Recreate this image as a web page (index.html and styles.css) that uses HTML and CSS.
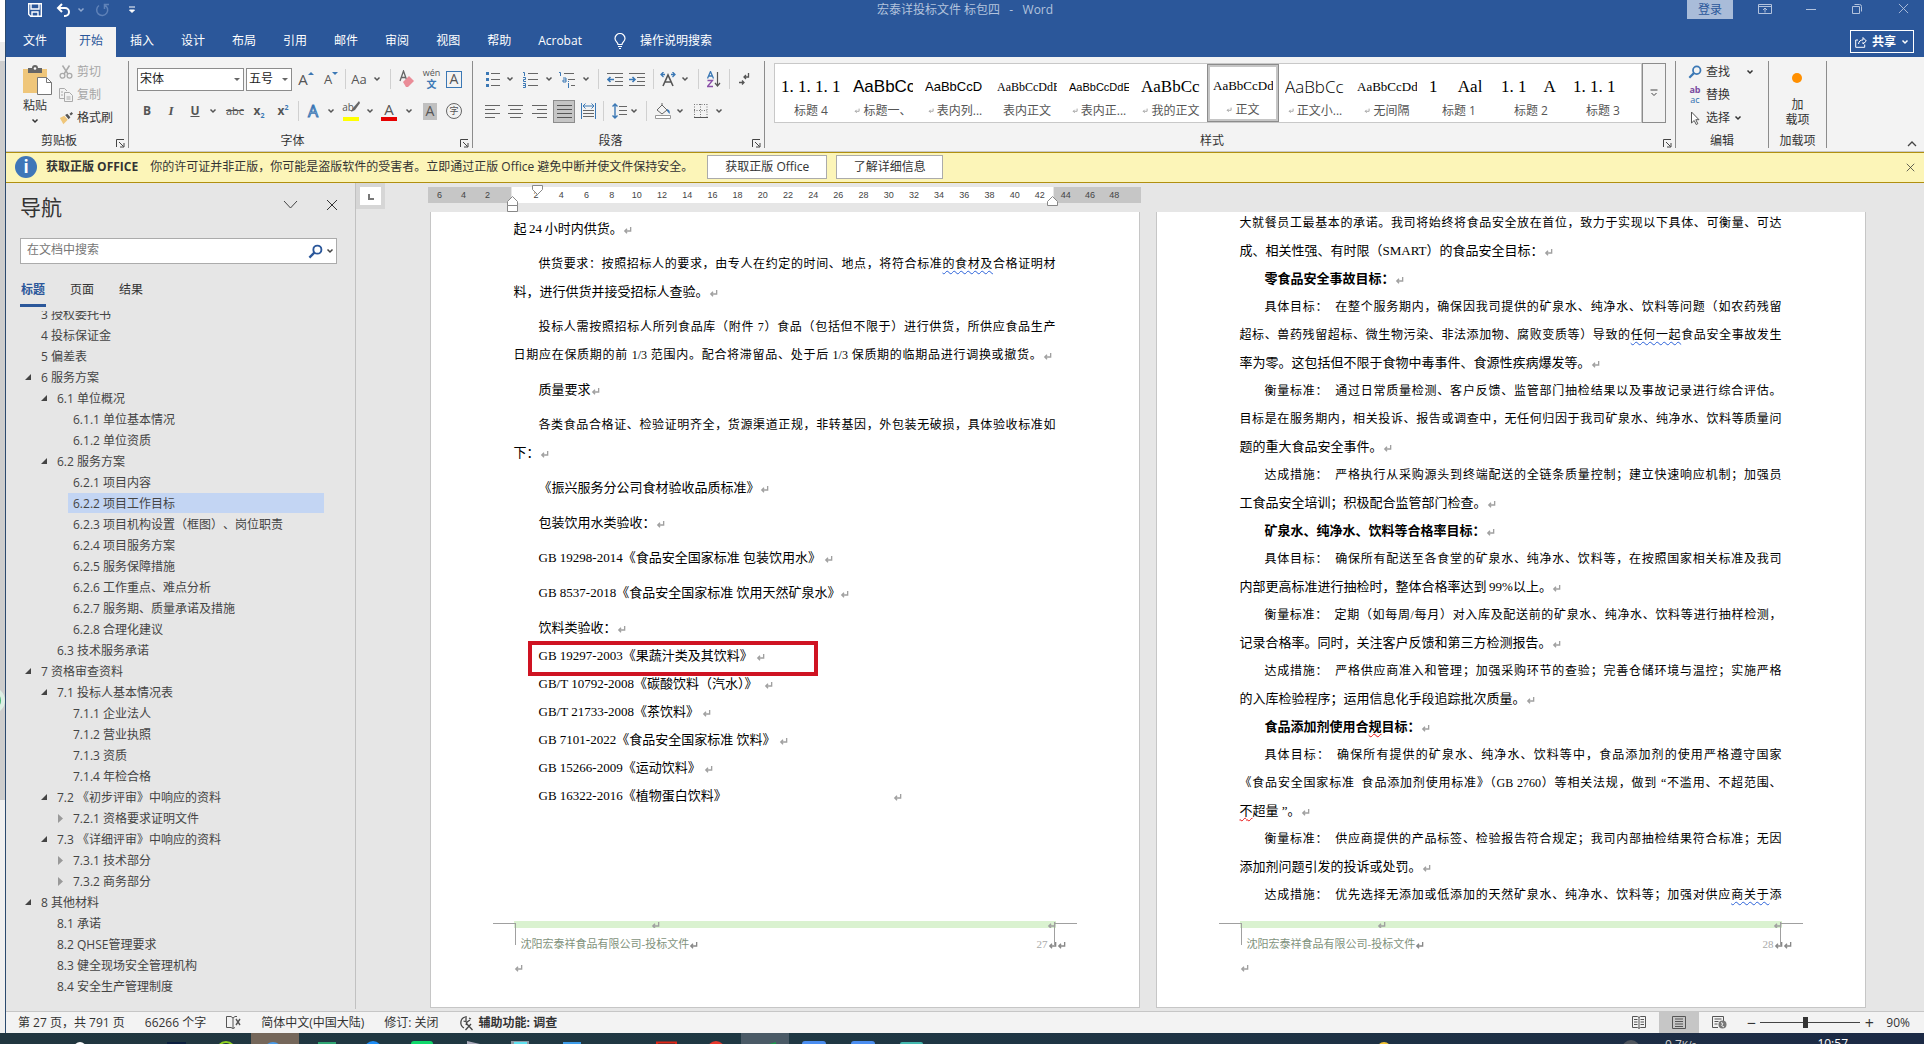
FILE: index.html
```html
<!DOCTYPE html>
<html lang="zh-CN">
<head>
<meta charset="utf-8">
<title>宏泰详投标文件 标包四 - Word</title>
<link rel="stylesheet" href="styles.css">
</head>
<body>
<svg class="defs" aria-hidden="true">
  <symbol id="chev" viewBox="0 0 8 8"><path d="M1.500 2.500 4 5l2.500-2.500" fill="none" stroke="currentColor" stroke-width="1.500"/></symbol>
  <symbol id="launch" viewBox="0 0 9 9"><path d="M.5 8V.5H8M3 3l4.500 4.500M8 4v4H4" fill="none" stroke="#444"/></symbol>
  <symbol id="close" viewBox="0 0 12 12"><path d="M1 1l10 10M11 1 1 11" fill="none" stroke="currentColor"/></symbol>
  <symbol id="lens" viewBox="0 0 16 16"><circle cx="10" cy="6" r="4.300" fill="none" stroke="currentColor" stroke-width="2"/><path d="M7 9 1.500 14.500" stroke="currentColor" stroke-width="2.500"/></symbol>
  <symbol id="ret" viewBox="0 0 10 10"><path d="M8.500 1v4.500H2M4.500 3 2 5.500 4.500 8" fill="none" stroke="currentColor" stroke-width="1.500"/></symbol>
</svg>
<div class="screen">
  <aside class="behind"><i class="blob"></i></aside>
  <div class="word">
    <header class="titlebar">
      <div class="quick">
        <button aria-label="保存"><svg width="14" height="14" viewBox="0 0 14 14"><path d="M.7.700h12.600v12.600H2.700L.7 11.300zM3 1v5h8V1M4 13V9h6v4" fill="none" stroke="#fff" stroke-width="1.400"/></svg></button>
        <button aria-label="撤消"><svg width="16" height="14" viewBox="0 0 16 14"><path d="M6 1 2 5l4 4M2 5h7a4 4 0 0 1 0 8H8" fill="none" stroke="#fff" stroke-width="2"/></svg></button>
        <button aria-label="撤消列表" class="dim"><svg width="8" height="8"><use href="#chev"/></svg></button>
        <button aria-label="重复" class="dim redo"><svg width="14" height="14" viewBox="0 0 14 14"><path d="M9.500 2A5.500 5.500 0 1 1 4 2.500M9.500 6V1.500H14" fill="none" stroke="#5f82b8" stroke-width="1.500"/></svg></button>
        <button aria-label="自定义快速访问工具栏"><svg width="8" height="8" viewBox="0 0 8 8"><path d="M1 1h6M1.500 4h5L4 6.500z" stroke="#fff" fill="#fff"/></svg></button>
      </div>
      <h1 class="doc-title">宏泰详投标文件 标包四 &nbsp;&nbsp;- &nbsp;&nbsp;Word</h1>
      <div class="winctl">
        <button class="login">登录</button>
        <button aria-label="功能区显示选项"><svg width="14" height="12" viewBox="0 0 14 12"><path d="M.5 1.500h13v9H.5zM.5 3.500h13M7 9.500v-4M5 7l2-2 2 2" fill="none" stroke="currentColor"/></svg></button>
        <button aria-label="最小化"><svg width="10" height="12"><path d="M0 6.500h10" stroke="currentColor"/></svg></button>
        <button aria-label="还原"><svg width="10" height="10" viewBox="0 0 10 10"><path d="M.5 2.500h7v7h-7zM2.500.500h5a2 2 0 0 1 2 2v5" fill="none" stroke="currentColor"/></svg></button>
        <button aria-label="关闭"><svg width="11" height="11"><use href="#close"/></svg></button>
      </div>
    </header>
    <nav class="tabs">
      <button class="file">文件</button><button class="on">开始</button><button>插入</button><button>设计</button><button>布局</button><button>引用</button><button>邮件</button><button>审阅</button><button>视图</button><button>帮助</button><button>Acrobat</button>
      <button class="tell"><svg width="12" height="16" viewBox="0 0 12 16"><path d="M4 11.500C4 9 1 8.500 1 5.500a5 5 0 0 1 10 0c0 3-3 3.500-3 6zM4 13.500h4M5 15.500h2" fill="none" stroke="#fff" stroke-width="1.200"/></svg>操作说明搜索</button>
      <button class="share"><svg width="12" height="12" viewBox="0 0 12 12"><path d="M3 4H.7v7.300h9V8.500M3.500 8c.5-3 2-4 4.500-4V1.500L11.300 5 8 8V6" fill="none" stroke="#fff"/></svg>共享<svg width="8" height="8"><use href="#chev"/></svg></button>
    </nav>
    <section class="ribbon">
      <div class="group clip">
        <div class="body">
          <button class="paste"><svg class="board" width="29" height="30" viewBox="0 0 29 30"><path d="M0 4h24v24H0z" fill="#efc67a"/><path d="M5 3h4a3 3 0 0 1 6 0h4v5H5z" fill="#666"/><circle cx="12" cy="3.500" r="1.300" fill="#fff"/><path d="M14.500 12.500h9l5 5v12h-14z" fill="#fff" stroke="#777"/><path d="M23.500 12.500v5h5" fill="none" stroke="#777"/></svg>粘贴<svg width="8" height="8"><use href="#chev"/></svg></button>
          <div class="stack">
            <button class="off"><svg width="14" height="14" viewBox="0 0 14 14"><path d="M3.500.500 9 9M10.500.500 5 9" stroke="#aaa" stroke-width="1.500"/><g fill="none" stroke="#aaa" stroke-width="1.300"><circle cx="3.500" cy="10.800" r="2.400"/><circle cx="10.500" cy="10.800" r="2.400"/></g></svg>剪切</button>
            <button class="off"><svg width="14" height="14" viewBox="0 0 14 14"><path d="M5 10.500H.5v-10h5l2.500 2.500M5.500 4.500h5l3 3v6h-8zM2 4h2M2 7h2M7.500 9h4M7.500 11h4" fill="none" stroke="#aaa"/></svg>复制</button>
            <button><svg width="14" height="14" viewBox="0 0 16 14"><path d="M1 7 6 4.500 10 9l-5 5z" fill="#efc67a"/><path d="M7 3.500 9.500 2l3.500 4-2 2.500zM12 2l2.500-2L16 2l-2.500 2z" fill="#555"/></svg>格式刷</button>
          </div>
        </div>
        <footer>剪贴板<svg class="launch"><use href="#launch"/></svg></footer>
      </div>
      <div class="group font">
        <div class="body rows">
          <div class="row f1">
            <label class="combo name"><select aria-label="字体"><option>宋体</option></select><i></i></label>
            <label class="combo"><select aria-label="字号"><option>五号</option></select><i></i></label>
            <button class="ga">A<sup class="up"></sup></button>
            <button class="gb">A<sup class="down"></sup></button>
            <i class="sep"></i>
            <button class="aa">Aa</button>
            <button aria-label="更改大小写"><svg width="8" height="8"><use href="#chev"/></svg></button>
            <i class="sep"></i>
            <button aria-label="清除格式"><svg width="16" height="18" viewBox="0 0 16 18"><path d="M1 11 4.500 1 8 11M2.300 7.500H7" fill="none" stroke="#666" stroke-width="1.300"/><path d="m4 12 6-6 5 5-6 6H7z" fill="#ea8c97"/></svg></button>
            <button class="wen" aria-label="拼音指南"><small>wén</small><b>文</b></button>
            <button class="boxed">A</button>
          </div>
          <div class="row f2">
            <button class="b">B</button><button class="it">I</button><button class="un">U</button>
            <button aria-label="下划线"><svg width="8" height="8"><use href="#chev"/></svg></button>
            <button class="st">abc</button>
            <button class="sc">x<sub>2</sub></button>
            <button class="sc">x<sup>2</sup></button>
            <i class="sep"></i>
            <button class="fx">A</button>
            <button aria-label="文本效果"><svg width="8" height="8"><use href="#chev"/></svg></button>
            <button class="hl" aria-label="突出显示">ab<svg width="10" height="12" viewBox="0 0 10 12"><path d="M9 0 3 7 1 11l4-2 5-7z" fill="#666"/></svg></button>
            <button aria-label="突出显示颜色"><svg width="8" height="8"><use href="#chev"/></svg></button>
            <button class="fc">A</button>
            <button aria-label="字体颜色"><svg width="8" height="8"><use href="#chev"/></svg></button>
            <button class="shade">A</button>
            <button class="ring">字</button>
          </div>
        </div>
        <footer>字体<svg class="launch"><use href="#launch"/></svg></footer>
      </div>
      <div class="group para">
        <div class="body rows">
          <div class="row p1">
            <button aria-label="项目符号"><svg width="14" height="16" viewBox="0 0 14 16"><path d="M5 2.500h9M5 8.500h9M5 14.500h9" stroke="#666"/><path d="M0 1h3v3H0zM0 7h3v3H0zM0 13h3v3H0z" fill="#3b78b5"/></svg></button>
            <button aria-label="项目符号库"><svg width="8" height="8"><use href="#chev"/></svg></button>
            <button aria-label="编号"><svg width="15" height="17" viewBox="0 0 15 17"><path d="M5 2.500h10M5 8.500h10M5 14.500h10" stroke="#666"/><path d="M0 1.500h1.500V5M0 6.500h2.500v2H.5v2H3M0 12.500h2.500v4H0m0-2h2.500" fill="none" stroke="#3b78b5"/></svg></button>
            <button aria-label="编号库"><svg width="8" height="8"><use href="#chev"/></svg></button>
            <button aria-label="多级列表"><svg width="16" height="17" viewBox="0 0 16 17"><path d="M5 2.500h10M9 8.500h7M12 14.500h4" stroke="#666"/><path d="M0 1.500h1.500V5M4 7h3v4H4V9h3M9.500 12v5M9.500 10v1" fill="none" stroke="#3b78b5"/></svg></button>
            <button aria-label="多级列表库"><svg width="8" height="8"><use href="#chev"/></svg></button>
            <i class="sep"></i>
            <button aria-label="减少缩进量"><svg width="16" height="13" viewBox="0 0 16 13"><path d="M0 .5h16M8 4.500h8M8 8.500h8M0 12.500h16" stroke="#666"/><path d="M7 6.500H1M3.500 4 1 6.500 3.500 9" fill="none" stroke="#3b78b5" stroke-width="1.600"/></svg></button>
            <button aria-label="增加缩进量"><svg width="16" height="13" viewBox="0 0 16 13"><path d="M0 .5h16M8 4.500h8M8 8.500h8M0 12.500h16" stroke="#666"/><path d="M0 6.500h6M3.500 4 6 6.500 3.500 9" fill="none" stroke="#3b78b5" stroke-width="1.600"/></svg></button>
            <i class="sep"></i>
            <button aria-label="中文版式"><svg width="16" height="15" viewBox="0 0 16 15"><path d="m3 14 5-11 5 11M5 10h6" fill="none" stroke="#555" stroke-width="1.600"/><path d="M3.500 0 1 2.500 3.500 5M12.500 0 15 2.500 12.500 5M1 2.500h4M15 2.500h-4" fill="none" stroke="#3b78b5" stroke-width="1.300"/></svg></button>
            <button aria-label="中文版式选项"><svg width="8" height="8"><use href="#chev"/></svg></button>
            <i class="sep"></i>
            <button aria-label="排序"><svg width="14" height="17" viewBox="0 0 14 17"><path d="m.5 7.500 3-7 3 7M1.500 5h4" fill="none" stroke="#3b78b5" stroke-width="1.300"/><path d="M.5 9.500h5l-5 6h5.500" fill="none" stroke="#8a4fa8" stroke-width="1.300"/><path d="M10.500 1v14M8 12l2.500 3 2.500-3" fill="none" stroke="#555" stroke-width="1.200"/></svg></button>
            <i class="sep"></i>
            <button aria-label="显示编辑标记"><svg width="12" height="14" viewBox="0 0 12 14"><path d="M10.500 1v4H6m2-2L6 5l2 2M1 10.500h5m-2-2 2 2-2 2" fill="none" stroke="#555" stroke-width="1.300"/></svg></button>
          </div>
          <div class="row p2">
            <button aria-label="左对齐"><svg width="15" height="13"><path d="M0 .5h15M0 4.500h10M0 8.500h15M0 12.500h10" stroke="#666"/></svg></button>
            <button aria-label="居中"><svg width="15" height="13"><path d="M0 .5h15M2 4.500h11M0 8.500h15M2 12.500h11" stroke="#666"/></svg></button>
            <button aria-label="右对齐"><svg width="15" height="13"><path d="M0 .5h15M5 4.500h10M0 8.500h15M5 12.500h10" stroke="#666"/></svg></button>
            <button aria-label="两端对齐" class="pressed"><svg width="15" height="13"><path d="M0 .5h15M0 4.500h15M0 8.500h15M0 12.500h15" stroke="#555"/></svg></button>
            <button aria-label="分散对齐"><svg width="15" height="16" viewBox="0 0 15 16"><path d="M2 7.500h11M2 10.500h11M2 13.500h11" stroke="#666"/><path d="M.5 0v16M14.500 0v16M2 3h11M4.500.500 2 3l2.500 2.500M10.500.500 13 3l-2.500 2.500" fill="none" stroke="#3b78b5"/></svg></button>
            <i class="sep"></i>
            <button aria-label="行和段落间距"><svg width="15" height="16" viewBox="0 0 15 16"><path d="M7 3.500h8M7 7.500h8M7 11.500h8" stroke="#666"/><path d="M3 1v14M.5 3.500 3 1l2.500 2.500M.5 12.500 3 15l2.500-2.500" fill="none" stroke="#3b78b5" stroke-width="1.400"/></svg></button>
            <button aria-label="行距选项"><svg width="8" height="8"><use href="#chev"/></svg></button>
            <i class="sep"></i>
            <button aria-label="底纹"><svg width="16" height="16" viewBox="0 0 16 16"><path d="m2 7 5-5 5 5-5 4zM7 2V0" fill="none" stroke="#666"/><path d="M12 6c3 1 3 3 2.500 5L12 8z" fill="#3b78b5"/><path d="M.5 12.500h15v3H.5z" fill="#fff" stroke="#999"/></svg></button>
            <button aria-label="底纹颜色"><svg width="8" height="8"><use href="#chev"/></svg></button>
            <button aria-label="边框"><svg width="14" height="14" viewBox="0 0 14 14"><path d="M.5 0v13M6.500 0v13M13 0v13M0 .5h13M0 6.500h13" stroke="#777" stroke-dasharray="1 1.500"/><path d="M0 13.500h14" stroke="#555"/></svg></button>
            <button aria-label="边框选项"><svg width="8" height="8"><use href="#chev"/></svg></button>
          </div>
        </div>
        <footer>段落<svg class="launch"><use href="#launch"/></svg></footer>
      </div>
      <div class="group styles">
        <div class="body">
          <div class="gallery">
            <button><span class="s17 serif">1. 1. 1. 1</span>标题 4</button>
            <button><span class="s17">AaBbCc</span><em><svg class="ret"><use href="#ret"/></svg>标题一、</em></button>
            <button><span class="s13">AaBbCcD</span><em><svg class="ret"><use href="#ret"/></svg>表内列...</em></button>
            <button><span class="s12 serif">AaBbCcDdE</span>表内正文</button>
            <button><span class="s11">AaBbCcDdE</span><em><svg class="ret"><use href="#ret"/></svg>表内正...</em></button>
            <button><span class="s17 serif">AaBbCc</span><em><svg class="ret"><use href="#ret"/></svg>我的正文</em></button>
            <button class="cur"><span class="s13 serif">AaBbCcDd</span><em><svg class="ret"><use href="#ret"/></svg>正文</em></button>
            <button><span class="s17 thin">AaBbCc</span><em><svg class="ret"><use href="#ret"/></svg>正文小...</em></button>
            <button><span class="s13 serif">AaBbCcDd</span><em><svg class="ret"><use href="#ret"/></svg>无间隔</em></button>
            <button><span class="s17 serif">1 &nbsp; &nbsp; Aal</span>标题 1</button>
            <button><span class="s17 serif">1. 1 &nbsp; &nbsp;A</span>标题 2</button>
            <button><span class="s17 serif">1. 1. 1</span>标题 3</button>
          </div>
          <button class="more" aria-label="其他样式"><svg width="8" height="8" viewBox="0 0 8 8"><path d="M.5 1h7M1.500 4 4 6.500 6.500 4" fill="none" stroke="#444"/></svg></button>
        </div>
        <footer>样式<svg class="launch"><use href="#launch"/></svg></footer>
      </div>
      <div class="group edit">
        <div class="body stack">
          <button><svg class="blue" width="14" height="14"><use href="#lens"/></svg>查找<svg class="far-chev" width="8" height="8"><use href="#chev"/></svg></button>
          <button><span class="rep"><b>ab</b><i>ac</i></span>替换</button>
          <button><svg width="14" height="15" viewBox="0 0 14 15"><path d="M3.500 1v11l2.700-2.500 2 4 1.600-.8-2-4H11z" fill="#fff" stroke="#555"/></svg>选择<svg width="8" height="8"><use href="#chev"/></svg></button>
        </div>
        <footer>编辑</footer>
      </div>
      <div class="group addin">
        <div class="body"><button><i class="dot"></i><span>加</span><span>载项</span></button></div>
        <footer>加载项</footer>
      </div>
      <button class="collapse" aria-label="折叠功能区"><svg width="10" height="6" viewBox="0 0 10 6"><path d="m1 5 4-4 4 4" fill="none" stroke="#444" stroke-width="1.300"/></svg></button>
    </section>
    <section class="notice">
      <span class="info">i</span><strong>获取正版 OFFICE</strong>
      <span class="msg">你的许可证并非正版，你可能是盗版软件的受害者。立即通过正版 Office 避免中断并使文件保持安全。</span>
      <button class="wide">获取正版 Office</button><button>了解详细信息</button>
      <button class="x" aria-label="关闭"><svg width="9" height="9"><use href="#close"/></svg></button>
    </section>
    <main>
      <aside class="nav">
        <header><h2>导航</h2><button aria-label="选项"><svg width="15" height="10" viewBox="0 0 15 10"><path d="m1 1 6.500 7L14 1" fill="none" stroke="#444"/></svg></button><button aria-label="关闭"><svg width="12" height="12"><use href="#close"/></svg></button></header>
        <div class="search"><input type="search" aria-label="在文档中搜索" placeholder="在文档中搜索"><button aria-label="搜索"><svg width="15" height="15"><use href="#lens"/></svg></button><button class="mini" aria-label="搜索选项"><svg width="8" height="8"><use href="#chev"/></svg></button></div>
        <div class="navtabs"><button class="on">标题</button><button>页面</button><button>结果</button></div>
        <div class="tree">
          <ul>
            <li class="l1">3 授权委托书</li>
            <li class="l1">4 投标保证金</li>
            <li class="l1">5 偏差表</li>
            <li class="l1 open">6 服务方案</li>
            <li class="l2 open">6.1 单位概况</li>
            <li class="l3">6.1.1 单位基本情况</li>
            <li class="l3">6.1.2 单位资质</li>
            <li class="l2 open">6.2 服务方案</li>
            <li class="l3">6.2.1 项目内容</li>
            <li class="l3 sel"><span>6.2.2 项目工作目标</span></li>
            <li class="l3">6.2.3 项目机构设置（框图）、岗位职责</li>
            <li class="l3">6.2.4 项目服务方案</li>
            <li class="l3">6.2.5 服务保障措施</li>
            <li class="l3">6.2.6 工作重点、难点分析</li>
            <li class="l3">6.2.7 服务期、质量承诺及措施</li>
            <li class="l3">6.2.8 合理化建议</li>
            <li class="l2">6.3 技术服务承诺</li>
            <li class="l1 open">7 资格审查资料</li>
            <li class="l2 open">7.1 投标人基本情况表</li>
            <li class="l3">7.1.1 企业法人</li>
            <li class="l3">7.1.2 营业执照</li>
            <li class="l3">7.1.3 资质</li>
            <li class="l3">7.1.4 年检合格</li>
            <li class="l2 open">7.2 《初步评审》中响应的资料</li>
            <li class="l3 shut">7.2.1 资格要求证明文件</li>
            <li class="l2 open">7.3 《详细评审》中响应的资料</li>
            <li class="l3 shut">7.3.1 技术部分</li>
            <li class="l3 shut">7.3.2 商务部分</li>
            <li class="l1 open">8 其他材料</li>
            <li class="l2">8.1 承诺</li>
            <li class="l2">8.2 QHSE管理要求</li>
            <li class="l2">8.3 健全现场安全管理机构</li>
            <li class="l2">8.4 安全生产管理制度</li>
          </ul>
        </div>
      </aside>
      <div class="canvas">
        <button class="tabsel" aria-label="制表符"><i></i></button>
        <div class="rulerbar">
          <div class="ruler">
            <div class="out left"><span>6</span><span>4</span><span>2</span></div>
            <div class="in"><span>2</span><span>4</span><span>6</span><span>8</span><span>10</span><span>12</span><span>14</span><span>16</span><span>18</span><span>20</span><span>22</span><span>24</span><span>26</span><span>28</span><span>30</span><span>32</span><span>34</span><span>36</span><span>38</span><span>40</span><span>42</span>
              <svg class="mk first" width="12" height="10" viewBox="0 0 12 10"><path d="M.5.500h10v4l-5 5-5-5z" fill="#fff" stroke="#888"/></svg>
              <svg class="mk hang" width="12" height="16" viewBox="0 0 12 16"><path d="M.5 9.500v-4l5-5 5 5v4zM.5 9.500h10v6H.5z" fill="#fff" stroke="#888"/></svg>
              <svg class="mk right" width="12" height="10" viewBox="0 0 12 10"><path d="M.5 9.500v-4l5-5 5 5v4z" fill="#fff" stroke="#888"/></svg>
            </div>
            <div class="out rt"><span>44</span><span>46</span><span>48</span></div>
          </div>
        </div>
        <div class="pages">
          <article class="page one">
            <div class="text">
              <p class="flush"><span>起&thinsp;24&thinsp;小时内供货。<svg class="ret"><use href="#ret"/></svg></span></p>
              <p><span class="full">供货要求：按照招标人的要求，由专人在约定的时间、地点，将符合标准<u class="gram">的食材及</u>合格证明材</span><span>料，进行供货并接受招标人查验。<svg class="ret"><use href="#ret"/></svg></span></p>
              <p><span class="full">投标人需按照招标人所列食品库（附件 7）食品（包括但不限于）进行供货，所供应食品生产</span><span class="full near">日期应在保质期的前 1/3 范围内。配合将滞留品、处于后 1/3 保质期的临期品进行调换或撤货。<svg class="ret"><use href="#ret"/></svg></span></p>
              <p><span>质量要求<svg class="ret"><use href="#ret"/></svg></span></p>
              <p><span class="full">各类食品合格证、检验证明齐全，货源渠道正规，非转基因，外包装无破损，具体验收标准如</span><span>下：<svg class="ret"><use href="#ret"/></svg></span></p>
              <p><span>《振兴服务分公司食材验收品质标准》<svg class="ret"><use href="#ret"/></svg></span></p>
              <p><span>包装饮用水类验收：<svg class="ret"><use href="#ret"/></svg></span></p>
              <p><span>GB 19298-2014《食品安全国家标准 包装饮用水》 <svg class="ret"><use href="#ret"/></svg></span></p>
              <p><span>GB 8537-2018《食品安全国家标准 饮用天然矿泉水》<svg class="ret"><use href="#ret"/></svg></span></p>
              <p class="tight"><span>饮料类验收：<svg class="ret"><use href="#ret"/></svg></span></p>
              <p class="tight boxmark"><span>GB 19297-2003《果蔬汁类及其饮料》 <svg class="ret"><use href="#ret"/></svg></span><i class="redbox"></i></p>
              <p class="tight"><span>GB/T 10792-2008《碳酸饮料（汽水）》 &nbsp;<svg class="ret"><use href="#ret"/></svg></span></p>
              <p class="tight"><span>GB/T 21733-2008《茶饮料》 <svg class="ret"><use href="#ret"/></svg></span></p>
              <p class="tight"><span>GB 7101-2022《食品安全国家标准 饮料》 <svg class="ret"><use href="#ret"/></svg></span></p>
              <p class="tight"><span>GB 15266-2009《运动饮料》 <svg class="ret"><use href="#ret"/></svg></span></p>
              <p class="tight"><span>GB 16322-2016《植物蛋白饮料》<svg class="ret away"><use href="#ret"/></svg></span></p>
            </div>
            <footer class="foot">
              <div class="green"><svg class="ret"><use href="#ret"/></svg><svg class="ret"><use href="#ret"/></svg></div>
              <div class="line"><span>沈阳宏泰祥食品有限公司-投标文件<svg class="ret"><use href="#ret"/></svg></span><span class="no">27<svg class="ret"><use href="#ret"/></svg><svg class="ret"><use href="#ret"/></svg></span></div>
              <svg class="ret"><use href="#ret"/></svg>
            </footer>
          </article>
          <article class="page two">
            <div class="text">
              <p class="flush"><span class="full">大就餐员工最基本的承诺。我司将始终将食品安全放在首位，致力于实现以下具体、可衡量、可达</span><span>成、相关性强、有时限（SMART）的食品安全目标：<svg class="ret"><use href="#ret"/></svg></span></p>
              <p class="bold"><span>零食品安全事故目标：<svg class="ret"><use href="#ret"/></svg></span></p>
              <p><span class="full">具体目标：&ensp;在整个服务期内，确保因我司提供的矿泉水、纯净水、饮料等问题（如农药残留</span><span class="full">超标、兽药残留超标、微生物污染、非法添加物、腐败变质等）导致的<u class="gram">任何一起</u>食品安全事故发生</span><span>率为零。这包括但不限于食物中毒事件、食源性疾病爆发等。<svg class="ret"><use href="#ret"/></svg></span></p>
              <p><span class="full">衡量标准：&ensp;通过日常质量检测、客户反馈、监管部门抽检结果以及事故记录进行综合评估。</span><span class="full">目标是在服务期内，相关投诉、报告或调查中，无任何归因于我司矿泉水、纯净水、饮料等质量问</span><span>题的重大食品安全事件。<svg class="ret"><use href="#ret"/></svg></span></p>
              <p><span class="full">达成措施：&ensp;严格执行从采购源头到终端配送的全链条质量控制；建立快速响应机制；加强员</span><span>工食品安全培训；积极配合监管部门检查。<svg class="ret"><use href="#ret"/></svg></span></p>
              <p class="bold"><span>矿泉水、纯净水、饮料等合格率目标：<svg class="ret"><use href="#ret"/></svg></span></p>
              <p><span class="full">具体目标：&ensp;确保所有配送至各食堂的矿泉水、纯净水、饮料等，在按照国家相关标准及我司</span><span>内部更高标准进行抽检时，整体合格率达到&thinsp;99%以上。<svg class="ret"><use href="#ret"/></svg></span></p>
              <p><span class="full">衡量标准：&ensp;定期（如每周/每月）对入库及配送前的矿泉水、纯净水、饮料等进行抽样检测，</span><span>记录合格率。同时，关注客户反馈和第三方检测报告。<svg class="ret"><use href="#ret"/></svg></span></p>
              <p><span class="full">达成措施：&ensp;严格供应商准入和管理；加强采购环节的查验；完善仓储环境与温控；实施严格</span><span>的入库检验程序；运用信息化手段追踪批次质量。<svg class="ret"><use href="#ret"/></svg></span></p>
              <p class="bold"><span>食品添加剂使用合<u class="spell">规</u>目标：<svg class="ret"><use href="#ret"/></svg></span></p>
              <p><span class="full">具体目标：&ensp;确保所有提供的矿泉水、纯净水、饮料等中，食品添加剂的使用严格遵守国家</span><span class="full">《食品安全国家标准&ensp;食品添加剂使用标准》（GB 2760）等相关法规，做到 “不滥用、不超范围、</span><span><u class="spell">不</u>超量 ”。<svg class="ret"><use href="#ret"/></svg></span></p>
              <p><span class="full">衡量标准：&ensp;供应商提供的产品标签、检验报告符合规定；我司内部抽检结果符合标准；无因</span><span>添加剂问题引发的投诉或处罚。<svg class="ret"><use href="#ret"/></svg></span></p>
              <p><span class="full">达成措施：&ensp;优先选择无添加或低添加的天然矿泉水、纯净水、饮料等；加强对供应<u class="gram">商关于</u>添</span></p>
            </div>
            <footer class="foot">
              <div class="green"><svg class="ret"><use href="#ret"/></svg><svg class="ret"><use href="#ret"/></svg></div>
              <div class="line"><span>沈阳宏泰祥食品有限公司-投标文件<svg class="ret"><use href="#ret"/></svg></span><span class="no">28<svg class="ret"><use href="#ret"/></svg><svg class="ret"><use href="#ret"/></svg></span></div>
              <svg class="ret"><use href="#ret"/></svg>
            </footer>
          </article>
        </div>
      </div>
    </main>
    <footer class="status">
      <span>第 27 页，共 791 页</span><span>66266 个字</span>
      <svg width="15" height="13" viewBox="0 0 15 13"><path d="M7 12.500V2L5 .5H.5v11H5l2 1 2-1M7 2 9 .5h2" fill="none" stroke="#555"/><path d="m10 3 4 6M14 3l-4 6" stroke="#555" stroke-width="1.400"/></svg>
      <span>简体中文(中国大陆)</span><span>修订: 关闭</span>
      <span class="acc"><svg width="16" height="16" viewBox="0 0 16 16"><path d="M6 2a6 6 0 0 0-1 11M7 1v5M4.500 6 8 7l3-2M8 7l-1 3M6.500 15 12 9M7.500 8.500l6 6.500M10 3l2 1" fill="none" stroke="#444" stroke-width="1.300"/></svg>辅助功能: 调查</span>
      <div class="views">
        <button aria-label="阅读视图"><svg width="14" height="13" viewBox="0 0 14 13"><path d="M7 12V1.500M.5.500h5L7 1.500 8.500.500h5v11h-5L7 12.500l-1.500-1h-5zM2 3.500h3.500M2 6h3.500M2 8.500h3.500M8.500 3.500H12M8.500 6H12M8.500 8.500H12" fill="none" stroke="#555"/></svg></button>
        <button class="on" aria-label="页面视图"><svg width="14" height="13" viewBox="0 0 14 13"><path d="M.5.500h13v12H.5zM3 3h8M3 5.500h8M3 8h8M3 10.500h8" fill="none" stroke="#555"/></svg></button>
        <button aria-label="Web 版式"><svg width="15" height="13" viewBox="0 0 15 13"><path d="M6 11.500H.5V.500h11V5M2.500 3h7M2.500 5.500h4M2.500 8h3" fill="none" stroke="#555"/><circle cx="10.500" cy="8.500" r="4" fill="#777"/><path d="M9 7c2-1 2 1 1 2s1 1 2 2" stroke="#fff" fill="none"/></svg></button>
      </div>
      <div class="zoom"><button>−</button><input type="range" aria-label="显示比例" min="0" max="100" value="45"><button>+</button><span>90%</span></div>
    </footer>
  </div>
</div>
<footer class="taskbar">
  <svg width="940" height="11" viewBox="0 0 940 11">
    <path d="M251 0h48v11h-48z" fill="#75675a"/><path d="M741 0h48v11h-48z" fill="#4a5a66"/>
    <circle cx="80" cy="15" r="6" fill="#fff"/><path d="M167 9h19v2h-19z" fill="#0b1f3f"/>
    <circle cx="226" cy="18" r="9" fill="none" stroke="#8fd320" stroke-width="2"/>
    <circle cx="273" cy="18" r="9" fill="#4a9be8"/><path d="M318 9h18v2h-18z" fill="#2fa572"/>
    <circle cx="373" cy="17" r="9" fill="#1d8cf5"/><rect x="411" y="8" width="22" height="8" rx="3" fill="#0fd86a"/>
    <path d="M467 8l13 3h-13z" fill="#aab"/><path d="M511 8h18v3h-18z" fill="#8a98a3"/><path d="M514 9h13v2h-13z" fill="#5fe0ef"/>
    <path d="M563 9h18v2h-18z" fill="#3c9be8"/><path d="M657 11V9.500h19V11" fill="none" stroke="#e02616" stroke-width="2"/>
    <circle cx="716" cy="17" r="9" fill="#e8382c"/><path d="m769 11 7-2v2z" fill="#1c9b4c"/>
    <rect x="802" y="8" width="24" height="8" rx="3" fill="#4a8df0"/><rect x="851" y="8" width="24" height="8" rx="3" fill="#4a8df0"/><rect x="900" y="9" width="23" height="8" rx="2" fill="#42b8ae"/>
  </svg>
  <div class="tray"><svg width="14" height="11"><circle cx="7" cy="16" r="7" fill="#f2c230"/></svg><svg class="gauge" width="20" height="11"><circle cx="10" cy="16" r="9" fill="#50565e"/></svg><span>0.7<small>K/s</small></span><time>10:57</time></div>
</footer>
</body>
</html>
```
FILE: styles.css
```css
* { box-sizing: border-box; }
body { margin: 0; height: 100vh; display: flex; flex-direction: column; overflow: hidden; font: 12px/16px "Open Sans", "Noto Sans CJK SC", sans-serif; color: #333; background: #e6e6e6; }
button { font: inherit; color: inherit; background: none; border: 0; padding: 0; margin: 0; }
h1, h2, p, ul { margin: 0; padding: 0; font: inherit; }
i, em { font-style: normal; }
svg { display: block; flex: none; }
.defs { position: absolute; width: 0; height: 0; }
.ret { width: 9px; height: 9px; color: #a0a0a0; }

.screen { flex: 1; min-height: 0; display: flex; }
.behind { width: 5px; flex: none; position: relative; overflow: hidden; background: linear-gradient(#fff 0 42px, #ececec 42px 61px, #cdcdcd 61px 800px, #f0f0f0 800px); }
.blob { position: absolute; top: 687px; left: -22px; width: 27px; height: 27px; border-radius: 50%; background: #48b678; border: 4px solid #dcefe4; }
.word { flex: 1; min-width: 0; display: flex; flex-direction: column; border-left: 1px solid #2c4a6e; }

.titlebar { height: 27px; flex: none; display: grid; grid-template-columns: 1fr auto 1fr; background: #2b579a; color: #b3c3dd; }
.quick { display: flex; align-items: flex-start; padding: 3px 0 0 22px; }
.quick button { height: 14px; display: flex; align-items: center; }
.quick button:nth-child(2) { margin-left: 14px; }
.quick button:nth-child(3) { margin-left: 5px; }
.quick .redo { margin: 0 19px 0 10px; }
.dim { color: #8fa8cf; }
.doc-title { line-height: 19px; white-space: pre; }
.winctl { display: flex; justify-content: flex-end; align-items: flex-start; }
.winctl button { width: 46px; height: 17px; display: flex; align-items: center; justify-content: center; }
.winctl button:last-child { margin-right: -2px; }
.winctl .login { height: 19px; margin-right: 9px; background: #a9bcd9; color: #2b579a; }

.tabs { height: 30px; flex: none; display: flex; gap: 1px; padding: 0 10px 0 4px; background: #2b579a; color: #fff; }
.tabs button { padding: 0 13px 2px; }
.tabs .file { margin-right: 5px; }
.tabs .on { background: #f3f3f3; color: #2b579a; }
.tabs .tell { display: flex; align-items: center; gap: 14px; padding-left: 18px; }
.tabs .share { margin: 3px 0 4px auto; display: flex; align-items: center; gap: 5px; padding: 0 4px; border: 1px solid #fff; font-weight: bold; }

.ribbon { height: 95px; flex: none; display: flex; background: #f3f3f3; border-bottom: 1px solid #c8c8c8; padding-top: 4px; }
.group { height: 87px; flex: none; display: flex; flex-direction: column; border-right: 1px solid #8c8c8c; }
.group .body { flex: 1; min-height: 0; display: flex; }
.group > footer { height: 15px; padding-right: 16px; text-align: center; position: relative; line-height: 16px; }
.edit > footer, .addin > footer { padding-right: 0; }
.launch { position: absolute; right: 3px; bottom: 0; width: 9px; height: 9px; }
.clip { width: 123px; }
.font { width: 344px; }
.para { width: 292px; }
.styles { width: 911px; }
.edit { width: 93px; }
.addin { width: 58px; }
.paste { width: 48px; margin-left: 5px; padding-top: 4px; display: flex; flex-direction: column; align-items: center; gap: 3px; line-height: 16px; }
.board { margin-left: 5px; }
.stack { display: flex; flex-direction: column; align-items: flex-start; gap: 1px; }
.stack button { height: 22px; display: flex; align-items: center; gap: 4px; white-space: nowrap; }
.off { color: #a6a6a6; }
.stack.body { padding-left: 12px; }
.blue { color: #3b78b5; }
.far-chev { margin-left: 12px; }
.rep { width: 14px; line-height: 10px; font-size: 9px; }
.rep b { display: block; color: #7a4aa0; }
.rep i { display: block; color: #2f6fb0; }
.rows { flex-direction: column; padding: 6px 8px 0; gap: 8px; }
.row { height: 24px; display: grid; align-items: center; justify-items: center; }
.row button { display: flex; align-items: center; justify-content: center; line-height: 20px; color: #555; }
.f1 { grid-template-columns: 109px 46px 28px 22px 6px 22px 14px 12px 21px 29px 16px; }
.f2 { grid-template-columns: 20px 28px 20px 16px 28px 20px 28px 3px 26px 10px 30px 8px 30px 10px 32px 16px; }
.p1 { grid-template-columns: 24px 10px 30px 8px 28px 9px 16px 18px 26px 6px 24px 10px 16px 16px 14px 16px; }
.p2 { grid-template-columns: 22px 24px 24px 26px 22px 8px 24px 6px 18px 16px 18px 24px 12px; }
.sep { width: 1px; height: 20px; background: #d0d0d0; }
.combo { position: relative; width: 46px; height: 23px; }
.combo.name { width: 107px; justify-self: start; }
.combo select { appearance: none; width: 100%; height: 100%; border: 1px solid #8c8c8c; background: #fff; font: inherit; color: #222; padding: 0 2px; }
.combo i { position: absolute; right: 4px; top: 10px; border: 3px solid transparent; border-top-color: #666; }
.row .ga { font-size: 15px; }
.row .gb { font-size: 13px; }
.up, .down { align-self: flex-start; border: 3px solid transparent; }
.up { border-bottom-color: #3b78b5; }
.down { border-top-color: #3b78b5; margin-top: 3px; }
.row .aa { font-size: 13px; }
.row .wen { flex-direction: column; line-height: 10px; }
.wen small { font-size: 9px; }
.wen b { color: #3b78b5; font-size: 10px; line-height: 12px; }
.row .boxed { width: 16px; height: 17px; border: 1px solid #3b78b5; font-size: 14px; }
.b { font-weight: bold; }
.it { font: italic bold 13px "Liberation Serif", serif; }
.un { font-weight: bold; text-decoration: underline; }
.st { font-size: 11px; text-decoration: line-through; }
.sc { font-weight: bold; }
.sc sub, .sc sup { font-size: 7px; line-height: 7px; color: #3b78b5; }
.sc sub { margin-top: 8px; }
.sc sup { margin-top: -8px; }
.row .fx { font-size: 16px; color: #fff; -webkit-text-stroke: 1px #3b78b5; }
.row .hl { position: relative; width: 16px; height: 20px; line-height: 12px; align-items: flex-start; font-size: 10px; border-bottom: 4px solid #ff0; }
.hl svg { margin-left: -4px; }
.row .fc { width: 16px; height: 20px; line-height: 16px; font-size: 15px; border-bottom: 4px solid #e60000; }
.row .shade { width: 14px; height: 17px; background: #c0c0c0; font-size: 14px; }
.row .ring { width: 16px; height: 16px; border: 1px solid #666; border-radius: 50%; font-size: 9px; }
.row .pressed { width: 22px; height: 23px; background: #c5c5c5; border: 1px solid #8c8c8c; }

.styles .body { padding: 2px 9px 0; }
.gallery { flex: 1; min-width: 0; height: 60px; display: grid; grid-template-columns: repeat(12, 72px); background: #fff; border: 1px solid #c8c8c8; }
.gallery button { height: 58px; padding: 6px 6px 0; color: #555; text-align: center; white-space: nowrap; overflow: hidden; }
.gallery button > span { display: block; height: 28px; line-height: 28px; margin-bottom: 2px; overflow: hidden; white-space: pre; color: #000; font-family: "Liberation Sans", sans-serif; text-align: left; }
.gallery button > .serif { font-family: "Liberation Serif", serif; }
.gallery button > .thin { font-family: "Open Sans", sans-serif; font-weight: 300; }
.s17 { font-size: 17px; }
.s13 { font-size: 13px; }
.s12 { font-size: 12px; }
.s11 { font-size: 11px; }
.gallery em { display: flex; align-items: center; justify-content: center; gap: 3px; }
.gallery .ret { width: 6px; height: 6px; }
.gallery .cur { border: 3px solid #c6c6c6; outline: 1px solid #8c8c8c; outline-offset: -1px; padding: 3px 3px 0; }
.more { width: 24px; height: 60px; border: 1px solid #8c8c8c; display: flex; align-items: center; justify-content: center; }
.addin .body { justify-content: center; align-items: flex-start; }
.addin button { display: flex; flex-direction: column; align-items: center; line-height: 15px; }
.dot { width: 10px; height: 10px; border-radius: 50%; background: #ff8f00; margin: 12px 0 14px; }
.collapse { margin: 0 7px 0 auto; align-self: flex-end; padding-bottom: 4px; }

.notice { height: 31px; flex: none; display: flex; align-items: center; padding: 0 9px 1px; background: #fcf5b8; border: solid #b08f10; border-width: 1px 0; }
.info { width: 22px; height: 22px; border-radius: 50%; background: #3f76b8; color: #fff; font: bold 17px/22px "Open Sans", sans-serif; text-align: center; margin-right: 9px; }
.msg { margin: 0 14px 0 12px; white-space: nowrap; }
.notice button { height: 24px; width: 107px; margin-right: 9px; background: #fff; border: 1px solid #ababab; }
.notice .wide { width: 120px; }
.notice .x { width: 9px; height: 9px; border: 0; background: none; margin: 0 0 0 auto; }

main { flex: 1; min-height: 0; display: flex; background: #e6e6e6; }
.nav { width: 350px; flex: none; margin-bottom: 2px; border-right: 1px solid #c1c1c1; display: flex; flex-direction: column; padding-left: 14px; }
.nav header { display: flex; align-items: center; gap: 28px; padding: 9px 17px 0 0; height: 38px; }
.nav header button { margin-top: -4px; }
.nav h2 { flex: 1; font-size: 21px; line-height: 32px; }
.search { height: 26px; flex: none; width: 317px; margin: 17px 0 0; display: flex; align-items: center; background: #fff; border: 1px solid #ababab; color: #2b579a; padding-right: 2px; }
.search input { flex: 1; min-width: 0; border: 0; outline: 0; background: none; font: inherit; padding: 0 6px 2px; }
.search input::placeholder { color: #767676; opacity: 1; }
.search .mini { margin-left: 3px; color: #444; }
.navtabs { display: flex; gap: 23px; margin-top: 14px; height: 29px; flex: none; }
.navtabs button { width: 26px; height: 29px; padding-bottom: 3px; border-bottom: 3px solid transparent; }
.navtabs .on { color: #2b579a; font-weight: bold; border-color: #2b579a; }
.tree { flex: 1; min-height: 0; overflow: hidden; margin-top: 4px; }
.tree ul { list-style: none; margin-top: -7px; }
.tree li { height: 21px; line-height: 21px; position: relative; color: #444; white-space: nowrap; text-spacing-trim: space-all; }
.l1 { margin-left: 21px; }
.l2 { margin-left: 37px; }
.l3 { margin-left: 53px; }
.open::before { content: ""; position: absolute; left: -16px; top: 7px; border: solid transparent; border-width: 0 0 6px 6px; border-bottom-color: #444; }
.shut::before { content: ""; position: absolute; left: -15px; top: 6px; width: 5px; height: 9px; background: #999; clip-path: polygon(0 0, 100% 50%, 0 100%); }
.sel span { display: block; height: 20px; line-height: 22px; width: 256px; margin-left: -5px; padding-left: 5px; background: #c3d5f3; }

.canvas { flex: 1; min-width: 0; position: relative; display: flex; flex-direction: column; }
.tabsel { position: absolute; left: 0; top: 0; width: 29px; height: 26px; border: 4px solid #d6d6d6; background: #fff; }
.tabsel i { display: block; width: 6px; height: 6px; margin: 2px 0 0 8px; border: solid #777; border-width: 0 0 2px 2px; }
.rulerbar, .pages { display: flex; justify-content: center; gap: 16px; padding-left: 15px; }
.rulerbar { height: 29px; flex: none; padding-top: 4px; }
.ruler { width: 1436px; height: 16px; display: flex; font: 9px/16px "Liberation Sans", sans-serif; color: #444; }
.ruler span { flex: 1; text-align: center; }
.ruler > div { display: flex; }
.out { background: #c6c6c6; }
.out.left { width: 83px; padding-right: 11px; margin-left: -2px; }
.ruler .in { width: 541px; padding-left: 12px; background: #fff; position: relative; margin: 0 1px; }
.out.rt { width: 87px; padding-right: 14px; }
.mk { position: absolute; }
.mk.first { left: 20px; top: -2px; }
.mk.hang { left: -5px; top: 9px; }
.mk.right { right: -6px; top: 9px; }
.page { width: 710px; height: 796px; flex: none; background: #fff; border: 1px solid #c6c6c6; border-top: 0; display: flex; flex-direction: column; padding: 0 83px; overflow: hidden; font: 13px/28px "Liberation Serif", "Noto Sans CJK SC", serif; color: #000; }
.text { flex: none; height: 709px; }
.one .text { padding-top: 3px; }
.two .text { margin-top: -3px; height: 712px; }
.text p { text-indent: 25px; position: relative; }
.one p { margin-bottom: 7px; }
.text .flush { text-indent: 0; }
.one .tight { margin-bottom: 0; }
.text p > span { display: block; height: 28px; white-space: nowrap; }
.text p > span + span { text-indent: 0; }
.text .full { font-size: 12px; text-align: justify; text-align-last: justify; white-space: normal; }
.text .near { padding-right: 4px; }
.text .bold { font-weight: bold; }
.text .ret, .line .ret { display: inline-block; vertical-align: -2px; }
.text .away { margin-left: 166px; }
u { text-decoration: underline wavy 1px; text-underline-offset: 2px; text-decoration-skip-ink: none; }
.gram { text-decoration-color: #2b62d9; }
.spell { text-decoration-color: #e81010; }
.redbox { position: absolute; left: 14px; top: -1px; width: 290px; height: 35px; border: 4px solid #cf1322; }
.foot { position: relative; font-size: 11px; line-height: 16px; }
.foot::before, .foot::after { content: ""; position: absolute; top: 2px; width: 22px; height: 21px; border-top: 1px solid #a0a0a0; }
.foot::before { left: -21px; border-right: 1px solid #a0a0a0; }
.foot::after { right: -21px; border-left: 1px solid #a0a0a0; }
.green { height: 7px; background: #daf2d0; display: flex; justify-content: space-between; padding-left: 137px; overflow: hidden; }
.line { display: flex; justify-content: space-between; margin: 8px -10px 12px 7px; color: #7f927c; }
.line .ret { color: #888; }
.no { color: #aaa; }

.status { height: 22px; flex: none; display: flex; align-items: center; background: #f3f3f3; border-top: 1px solid #c6c6c6; padding-left: 12px; gap: 20px; white-space: nowrap; }
.acc { display: flex; gap: 4px; font-weight: bold; }
.views { margin-left: auto; display: flex; height: 100%; }
.views button { width: 40px; display: flex; align-items: center; justify-content: center; }
.views .on { background: #c6c6c6; }
.zoom { display: flex; align-items: center; margin: 0 14px 0 -15px; }
.zoom button { width: 14px; font-size: 16px; }
.zoom span { margin-left: 10px; }
.zoom input { appearance: none; width: 100px; height: 12px; margin: 0 2px; background: linear-gradient(#444, #444) center / 100% 1px no-repeat; }
.zoom input::-webkit-slider-thumb { appearance: none; width: 5px; height: 11px; background: #333; }

.taskbar { height: 11px; flex: none; display: flex; justify-content: space-between; overflow: hidden; background: linear-gradient(90deg, #21363f, #1f3843 40%, #1c2a45); color: #fff; }
.tray { display: flex; padding-right: 76px; }
.tray span { margin-left: 24px; padding-top: 4px; color: #d0d0d0; }
.tray small { font-size: 10px; }
.gauge { margin-left: 230px; }
.tray time { margin-left: 121px; padding-top: 3px; }
```
